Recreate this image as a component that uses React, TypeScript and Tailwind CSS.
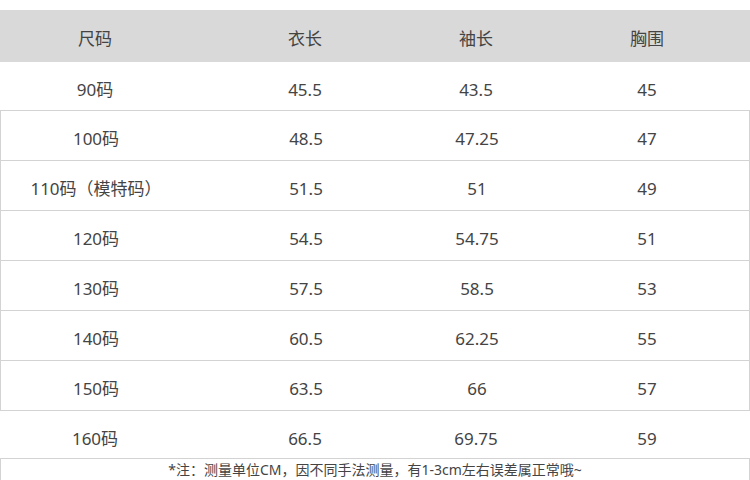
import React from "react";

const rows: [string, string, string, string][] = [
  ["100码", "48.5", "47.25", "47"],
  ["110码（模特码）", "51.5", "51", "49"],
  ["120码", "54.5", "54.75", "51"],
  ["130码", "57.5", "58.5", "53"],
  ["140码", "60.5", "62.25", "55"],
  ["150码", "63.5", "66", "57"],
];

function Cells({ r }: { r: [string, string, string, string] }) {
  return (
    <>
      <div className="flex justify-center">{r[0]}</div>
      <div className="flex justify-center">{r[1]}</div>
      <div className="flex justify-center">{r[2]}</div>
      <div className="flex justify-center pl-[12px]">{r[3]}</div>
    </>
  );
}

export default function App() {
  return (
    <div
      className="w-[750px] h-[480px] overflow-hidden bg-white pt-[10px] text-[17px] leading-[24px] text-[#444444]"
      style={{ fontFamily: '"Noto Sans", "Noto Sans CJK SC", sans-serif' }}
    >
      <div className="grid grid-cols-[190px_230px_112px_1fr] items-center h-[52px] bg-[#d9d9d9] pt-[5px]">
        <Cells r={["尺码", "衣长", "袖长", "胸围"]} />
      </div>
      <div className="grid grid-cols-[190px_230px_112px_1fr] items-center h-[48px] pt-[7px]">
        <Cells r={["90码", "45.5", "43.5", "45"]} />
      </div>
      <div className="border-x border-b border-[#d3d3d3]">
        {rows.map((r) => (
          <div
            key={r[0]}
            className="grid grid-cols-[190px_230px_112px_1fr] items-center h-[50px] border-t border-[#d3d3d3] pt-[7px]"
          >
            <Cells r={r} />
          </div>
        ))}
      </div>
      <div className="grid grid-cols-[190px_230px_112px_1fr] items-center h-[47px] pt-[9px]">
        <Cells r={["160码", "66.5", "69.75", "59"]} />
      </div>
      <div className="h-[30px] border border-[#d3d3d3] flex justify-center items-start pt-[1px] text-[14px] leading-[20px]">
        *注：测量单位CM，因不同手法测量，有1-3cm左右误差属正常哦~
      </div>
    </div>
  );
}
